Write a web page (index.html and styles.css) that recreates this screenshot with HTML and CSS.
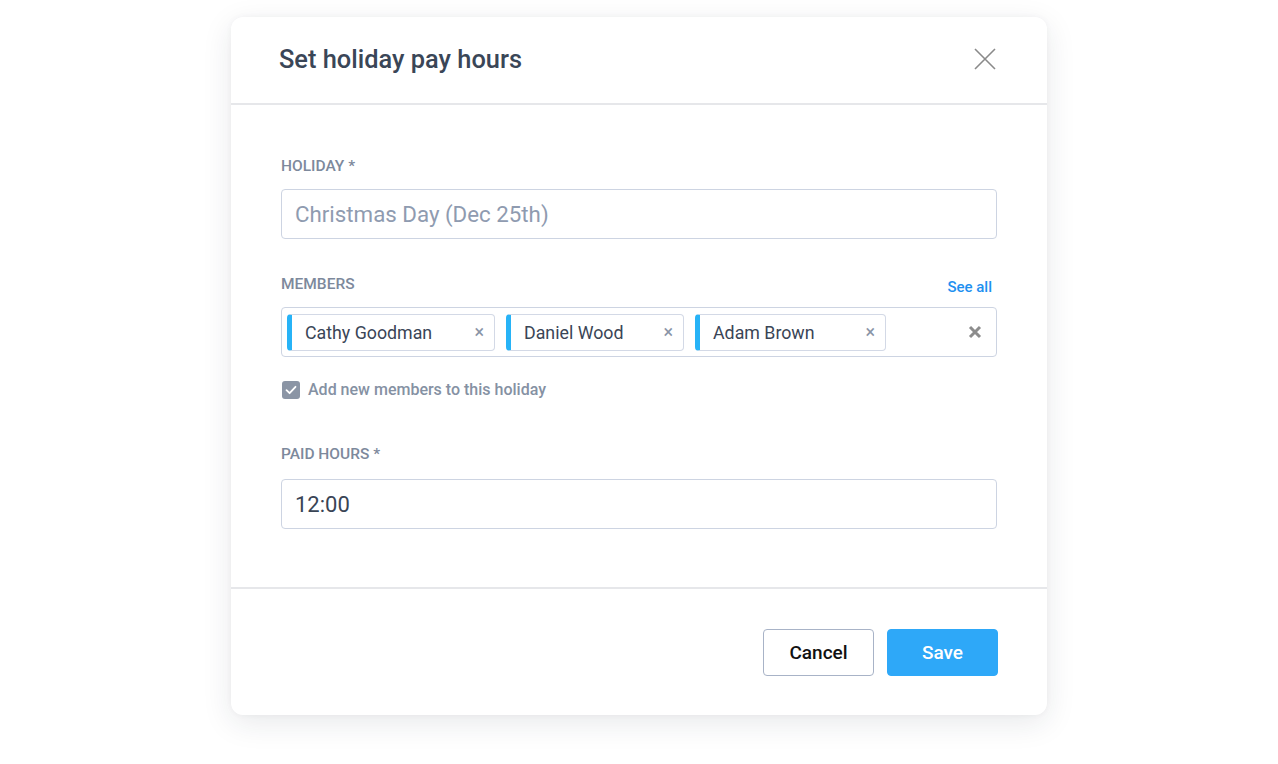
FILE: index.html
```html
<!DOCTYPE html>
<html>
<head>
<meta charset="utf-8">
<link rel="stylesheet" href="styles.css">
</head>
<body>
<div class="modal">
  <div class="modal-header">
    <h1 class="title">Set holiday pay hours</h1>
    <button class="close" aria-label="Close">
      <svg width="22" height="22" viewBox="0 0 22 22"><path d="M1 1L21 21M21 1L1 21" stroke="#8a8a8a" stroke-width="1.6" fill="none"/></svg>
    </button>
  </div>
  <div class="modal-body">
    <div class="field holiday">
      <div class="label-row"><span class="label">HOLIDAY *</span></div>
      <div class="input placeholder">Christmas Day (Dec 25th)</div>
    </div>
    <div class="field members">
      <div class="label-row"><span class="label">MEMBERS</span><a class="see-all">See all</a></div>
      <div class="input tags">
        <div class="chip c1"><span class="chip-name">Cathy Goodman</span><span class="chip-x">×</span></div>
        <div class="chip c2"><span class="chip-name">Daniel Wood</span><span class="chip-x">×</span></div>
        <div class="chip c3"><span class="chip-name">Adam Brown</span><span class="chip-x">×</span></div>
        <span class="clear">
          <svg width="14" height="14" viewBox="0 0 14 14"><path d="M2 2L12 12M12 2L2 12" stroke="#8c8c8c" stroke-width="3" stroke-linecap="butt" fill="none"/></svg>
        </span>
      </div>
      <label class="check-row">
        <span class="checkbox"><svg width="18" height="18" viewBox="0 0 18 18"><path d="M4.5 9.2L7.6 12.2L13.5 5.8" stroke="#fff" stroke-width="1.8" fill="none" stroke-linecap="round" stroke-linejoin="round"/></svg></span>
        <span class="check-text">Add new members to this holiday</span>
      </label>
    </div>
    <div class="field paid">
      <div class="label-row"><span class="label">PAID HOURS *</span></div>
      <div class="input value">12:00</div>
    </div>
  </div>
  <div class="modal-footer">
    <button class="btn btn-cancel">Cancel</button>
    <button class="btn btn-save">Save</button>
  </div>
</div>
</body>
</html>
```
FILE: styles.css
```css
* { box-sizing: border-box; }
html, body { margin: 0; padding: 0; background: #ffffff; }
body {
  font-family: Roboto, "Liberation Sans", Arial, sans-serif;
  width: 1278px;
  height: 764px;
  overflow: hidden;
}
.modal {
  margin: 17px 0 0 231px;
  width: 816px;
  height: 698px;
  background: #fff;
  border-radius: 12px;
  box-shadow: 0 8px 30px rgba(30, 40, 60, 0.10), 0 0 6px rgba(30, 40, 60, 0.04);
  display: flex;
  flex-direction: column;
}
.modal-header {
  height: 88px;
  border-bottom: 2px solid #e6e7ea;
  display: flex;
  align-items: center;
  justify-content: space-between;
  padding: 0 51px 2px 48px;
}
.title {
  margin: 0;
  font-size: 25.4px;
  font-weight: 500;
  color: #3a4657;
  padding-bottom: 1px;
}
.close {
  border: 0;
  background: none;
  padding: 0;
  width: 22px;
  height: 22px;
  display: flex;
  cursor: pointer;
}
.modal-body {
  padding: 50px 50px 0 50px;
  height: 484px;
  border-bottom: 2px solid #e6e7ea;
}
.field { margin-bottom: 34px; }
.label-row {
  display: flex;
  justify-content: space-between;
  align-items: flex-end;
  height: 21px;
  margin-bottom: 13px;
}
.label {
  font-size: 15.5px;
  font-weight: 500;
  color: #7d899c;
  line-height: 20px;
}
.see-all {
  font-size: 15px;
  font-weight: 500;
  color: #1e90f0;
  line-height: 20px;
  margin-right: 5px;
  margin-bottom: -3px;
}
.input {
  height: 50px;
  border: 1.5px solid #cdd4e2;
  border-radius: 4px;
  display: flex;
  align-items: center;
  padding: 0 13px;
  font-size: 22px;
}
.placeholder { color: #8f9bb0; font-size: 22.3px; }
.value { color: #394455; }
.tags {
  padding: 0 14px 0 5px;
  gap: 11px;
}
.chip {
  height: 37px;
  border: 1.5px solid #d3d9e6;
  border-left: 5px solid #27b3f7;
  border-radius: 4px;
  display: flex;
  align-items: center;
  justify-content: space-between;
  padding: 0 10px 0 13px;
}
.c1 { width: 208px; }
.c2 { width: 178px; }
.c3 { width: 191px; }
.chip-name {
  font-size: 17.8px;
  color: #3a4556;
}
.chip-x {
  font-size: 18px;
  color: #8a94a6;
  line-height: 1;
}
.clear {
  margin-left: auto;
  display: flex;
  margin-right: 0;
}
.check-row {
  display: flex;
  align-items: center;
  margin-top: 23px;
  gap: 8px;
  margin-left: 1px;
}
.checkbox {
  width: 18px;
  height: 18px;
  border-radius: 3px;
  background: #8b95a5;
  display: flex;
}
.check-text {
  font-size: 16px;
  font-weight: 500;
  color: #8591a3;
}
.field.members { margin-bottom: 44px; }
.field.paid .label-row { margin-bottom: 15px; }
.modal-footer {
  flex: 1;
  display: flex;
  justify-content: flex-end;
  align-items: flex-start;
  padding: 40px 49px 0 0;
  gap: 13px;
}
.btn {
  width: 111px;
  height: 47px;
  border-radius: 4px;
  font-family: Roboto, "Liberation Sans", Arial, sans-serif;
  font-size: 19px;
  font-weight: 500;
  cursor: pointer;
}
.btn-cancel {
  background: #fff;
  border: 1px solid #a8b3c7;
  color: #111;
}
.btn-save {
  background: #2ea8f8;
  border: 1px solid #2ea8f8;
  color: #fff;
}
```
